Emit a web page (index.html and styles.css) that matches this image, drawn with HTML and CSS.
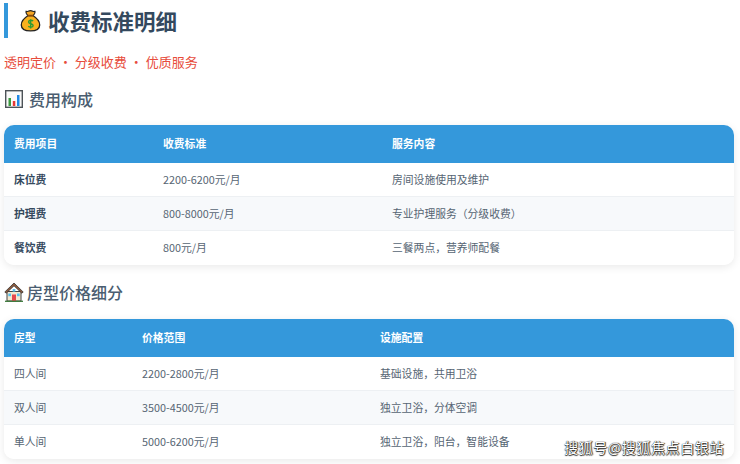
FILE: index.html
```html
<!DOCTYPE html>
<html lang="zh-CN">
<head>
<meta charset="utf-8">
<title>收费标准明细</title>
<link rel="stylesheet" href="styles.css">
</head>
<body>
<div class="page">
  <h1 class="title">
    <svg class="title-icon" viewBox="0 0 24 26" width="21" height="25">
      <path d="M7 2.500c1.500 1 2.500-.8 5-.8s3.500 1.800 5 .8c.6 1.500-.8 3.700-2 5H9C7.800 6.200 6.400 4 7 2.500z" fill="#f5a623" stroke="#222" stroke-width="1.300"/>
      <path d="M9 7.500h6c4 2.500 7.500 6.500 7.500 10.500 0 4.500-4 6.800-10.500 6.800S1.500 22.500 1.500 18C1.500 14 5 10 9 7.500z" fill="#f9b11f" stroke="#222" stroke-width="1.500"/>
      <path d="M8.500 7.400h7" stroke="#8a4b08" stroke-width="2"/>
      <path d="M15 13.500c-1-1-5.200-1.300-5.200 1.200 0 2.700 5.200 1.300 5.200 4 0 2.500-4.300 2.200-5.500 1M12.200 11.500v10.500" fill="none" stroke="#2a9a35" stroke-width="1.600"/>
    </svg>
    收费标准明细
  </h1>
  <p class="subtitle">透明定价 · 分级收费 · 优质服务</p>

  <h2 class="section first">
    <svg class="sec-icon" viewBox="0 0 18 18" width="18" height="18">
      <rect x=".7" y=".7" width="16.600" height="16.600" fill="#fafafa" stroke="#4d5358" stroke-width="1.400"/>
      <rect x="3.500" y="8" width="2.500" height="8" fill="#3a9a3e"/>
      <rect x="7.800" y="11" width="2.500" height="5" fill="#e53935"/>
      <rect x="12" y="5" width="2.500" height="11" fill="#1e88e5"/>
    </svg>
    费用构成
  </h2>
  <table class="fee-table fee">
    <colgroup><col class="c1"><col class="c2"><col class="c3"></colgroup>
    <thead><tr><th>费用项目</th><th>收费标准</th><th>服务内容</th></tr></thead>
    <tbody>
      <tr><td class="strong">床位费</td><td>2200-6200元/月</td><td>房间设施使用及维护</td></tr>
      <tr><td class="strong">护理费</td><td>800-8000元/月</td><td>专业护理服务（分级收费）</td></tr>
      <tr><td class="strong">餐饮费</td><td>800元/月</td><td>三餐两点，营养师配餐</td></tr>
    </tbody>
  </table>

  <h2 class="section second">
    <svg class="sec-icon house" viewBox="0 0 20 20" width="20" height="20">
      <path d="M3 9.500h14V19H3z" fill="#f3e7cf" stroke="#444" stroke-width="1"/>
      <path d="M10 1 .8 10l1.400 1.200L10 3.800l7.800 7.400 1.400-1.200z" fill="#8d5a3c" stroke="#333" stroke-width=".8"/>
      <rect x="8" y="12.500" width="4" height="6.500" fill="#e5484d"/>
      <rect x="4.300" y="11.500" width="2.700" height="2.700" fill="#57c1ee"/>
      <rect x="13" y="11.500" width="2.700" height="2.700" fill="#57c1ee"/>
      <rect x="8.700" y="7" width="2.600" height="2.600" fill="#57c1ee"/>
      <path d="M1 19.300h18" stroke="#3c7a3c" stroke-width="1.300"/>
    </svg>
    房型价格细分
  </h2>
  <table class="fee-table room">
    <colgroup><col class="c1"><col class="c2"><col class="c3"></colgroup>
    <thead><tr><th>房型</th><th>价格范围</th><th>设施配置</th></tr></thead>
    <tbody>
      <tr><td>四人间</td><td>2200-2800元/月</td><td>基础设施，共用卫浴</td></tr>
      <tr><td>双人间</td><td>3500-4500元/月</td><td>独立卫浴，分体空调</td></tr>
      <tr><td>单人间</td><td>5000-6200元/月</td><td>独立卫浴，阳台，智能设备</td></tr>
    </tbody>
  </table>
</div>
<div class="watermark">搜狐号@搜狐焦点白银站</div>
</body>
</html>
```
FILE: styles.css
```css
* { box-sizing: border-box; }
html, body { margin: 0; padding: 0; }
body {
  width: 740px;
  height: 464px;
  overflow: hidden;
  position: relative;
  background: #fff;
  font-family: "Noto Sans CJK SC", "Noto Sans", sans-serif;
}
.page { padding: 3px 6px 0 4px; }
.title {
  display: flex;
  align-items: center;
  height: 35px;
  margin: 0;
  padding-left: 12px;
  border-left: 4px solid #3498db;
  font-size: 21.500px;
  font-weight: 700;
  line-height: 35px;
  color: #34495e;
}
.title-icon { margin: 0 7px 0 0; flex: none; }
.subtitle {
  margin: 14px 0 0;
  height: 20px;
  font-size: 13px;
  line-height: 20px;
  color: #e74c3c;
}
.section {
  display: flex;
  align-items: center;
  margin: 0;
  font-size: 16px;
  font-weight: 500;
  line-height: 24px;
  height: 24px;
  color: #4a5d70;
}
.section.first { margin-top: 15px; margin-bottom: 14px; }
.section.second { margin-top: 15px; margin-bottom: 15px; }
.sec-icon { margin: 0 6px 0 1px; flex: none; }
.sec-icon.house { margin: 0 3px 0 0; }
.fee-table {
  width: 730px;
  table-layout: fixed;
  border-collapse: separate;
  border-spacing: 0;
  border-radius: 10px;
  overflow: hidden;
  box-shadow: 0 2px 8px rgba(0, 0, 0, .09);
  font-size: 10.800px;
  color: #566573;
}
.fee .c1 { width: 149px; }
.fee .c2 { width: 229px; }
.fee .c3 { width: 352px; }
.room .c1 { width: 128px; }
.room .c2 { width: 238px; }
.room .c3 { width: 364px; }
.fee-table th {
  height: 38px;
  padding: 0 10px 2px;
  background: #3498db;
  color: #fff;
  font-weight: 700;
  text-align: left;
}
.fee-table td {
  height: 34px;
  padding: 0 10px 2px;
  background: #fff;
  border-bottom: 1px solid #edf0f3;
}
.fee-table tr:nth-child(even) td { background: #f7f9fb; }
.fee-table tr:last-child td { border-bottom: 0; }
.fee-table td.strong { font-weight: 700; color: #34495e; }
.watermark {
  position: absolute;
  right: 16px;
  top: 438px;
  font-size: 14px;
  line-height: 18px;
  letter-spacing: .6px;
  color: #fff;
  text-shadow: 0 0 1px #000, 1px 0 1px #333, 0 1px 1px #333;
}
```
